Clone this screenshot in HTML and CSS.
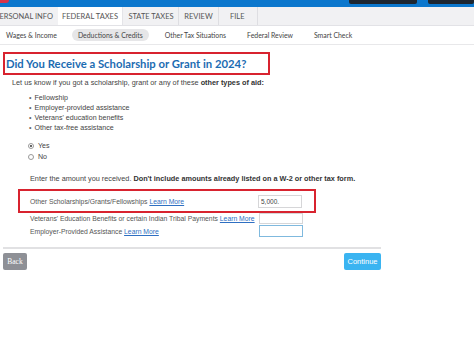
FILE: index.html
```html
<!DOCTYPE html>
<html lang="en">
<head>
    <meta charset="UTF-8">
    <title>Federal Taxes - Deductions &amp; Credits</title>
    <link rel="stylesheet" href="styles.css">
</head>
<body>

    <header id="topbar">
        <span class="logo-bit"></span>
        <span class="top-box wide"></span>
        <span class="top-box"></span>
    </header>

    <nav id="tabs">
        <div class="tab first">PERSONAL INFO</div>
        <div class="tab active">FEDERAL TAXES</div>
        <div class="tab">STATE TAXES</div>
        <div class="tab">REVIEW</div>
        <div class="tab">FILE</div>
    </nav>

    <nav id="subnav">
        <div class="sub-item">Wages &amp; Income</div>
        <div class="sub-item current">Deductions &amp; Credits</div>
        <div class="sub-item">Other Tax Situations</div>
        <div class="sub-item">Federal Review</div>
        <div class="sub-item">Smart Check</div>
    </nav>

    <main id="page">

        <h1 class="outlined">Did You Receive a Scholarship or Grant in 2024?</h1>

        <p class="intro">Let us know if you got a scholarship, grant or any of these <b>other types of aid:</b></p>

        <ul class="aid-list">
            <li>Fellowship</li>
            <li>Employer-provided assistance</li>
            <li>Veterans' education benefits</li>
            <li>Other tax-free assistance</li>
        </ul>

        <div class="choices">
            <label class="choice"><span class="radio checked"></span>Yes</label>
            <label class="choice"><span class="radio"></span>No</label>
        </div>

        <p class="enter">Enter the amount you received. <b>Don't include amounts already listed on a W-2 or other tax form.</b></p>

        <div class="amounts">
            <div class="amount-row outlined">
                <span class="label">Other Scholarships/Grants/Fellowships <a href="#">Learn More</a></span>
                <input class="amount" type="text" value="5,000.">
            </div>
            <div class="amount-row tight">
                <span class="label">Veterans' Education Benefits or certain Indian Tribal Payments <a href="#">Learn More</a></span>
                <input class="amount" type="text" value="">
            </div>
            <div class="amount-row">
                <span class="label">Employer-Provided Assistance <a href="#">Learn More</a></span>
                <input class="amount focused" type="text" value="">
            </div>
        </div>

        <div class="footer-bar">
            <button class="btn back" type="button">Back</button>
            <button class="btn continue" type="button">Continue</button>
        </div>

    </main>

</body>
</html>
```

FILE: styles.css
```css
* {
    margin: 0px;
    padding: 0px;
    box-sizing: border-box;
}
html, body {
    width: 100%;
    height: 100%;
    background: white;
}
body {
    font-family: 'Liberation Sans', Arial, sans-serif;
    color: #444;
    overflow: hidden;
}
ul {
    list-style-type: none;
}

/* top blue strip */
#topbar {
    height: 7px;
    background-color: #0b77cd;
    display: flex;
    align-items: flex-start;
}
.logo-bit {
    width: 9px;
    height: 3px;
    background-color: #d8334a;
    border-radius: 0 0 4px 0;
}
.top-box {
    height: 4px;
    background-color: #1d2630;
    border-radius: 0 0 2px 2px;
}
.top-box.wide {
    width: 68px;
    margin-left: auto;
}
.top-box:last-child {
    width: 46px;
    margin-left: 11px;
}

/* main tabs */
#tabs {
    height: 19px;
    background-color: #f1f1f3;
    border-bottom: 1px solid #e2e2e6;
    display: flex;
    font-family: 'Lato', sans-serif;
    font-size: 7.5px;
    color: #555;
    white-space: nowrap;
    overflow: hidden;
}
.tab {
    display: flex;
    align-items: center;
    flex-shrink: 0;
    padding: 0 5px;
    border-right: 1px solid #dedee2;
}
.tab.first {
    margin-left: -5px;
    padding-left: 0;
    width: 63px;
    border-right: none;
}
.tab.active {
    background-color: white;
    width: 65px;
    justify-content: center;
    border-right: 1px solid #e4e4e8;
}
.tab:nth-child(3) {
    width: 56px;
    justify-content: center;
    padding-left: 6px;
}
.tab:nth-child(4) {
    width: 40px;
    justify-content: center;
}
.tab:nth-child(5) {
    width: 39px;
    padding-left: 11px;
}

/* second row */
#subnav {
    height: 19px;
    border-bottom: 1px solid #e8e8ea;
    display: flex;
    align-items: center;
    font-family: 'Lato', sans-serif;
    font-size: 6.9px;
    color: #444;
    padding-left: 6px;
    white-space: nowrap;
}
.sub-item {
    margin-right: 15px;
}
.sub-item:nth-child(2) {
    margin-right: 16px;
}
.sub-item:nth-child(3),
.sub-item:nth-child(4) {
    margin-right: 21px;
}
.sub-item.current {
    background-color: #e6e6e8;
    border-radius: 6px;
    padding: 2px 6px;
}

#page {
    width: 378px;
    margin-left: 3px;
}

.outlined {
    border: 2px solid #d8232f;
}
h1 {
    margin-top: 7px;
    width: 267px;
    height: 23px;
    padding-left: 1px;
    display: flex;
    align-items: center;
    font-family: 'Lato', sans-serif;
    font-weight: 700;
    font-size: 11.3px;
    color: #1c6cb2;
}

.intro {
    font-size: 7.3px;
    margin: 3px 0 0 9px;
    line-height: 9px;
}
.intro b, .enter b {
    color: #333;
}
.aid-list {
    margin: 6px 0 0 26px;
    font-size: 7.1px;
    line-height: 10px;
}
.aid-list li::before {
    content: "\2022";
    margin-right: 3px;
    color: #666;
}

.choices {
    margin: 8px 0 0 25px;
    display: flex;
    flex-direction: column;
}
.choice {
    display: flex;
    align-items: center;
    font-size: 7.1px;
    height: 10.5px;
}
.radio {
    width: 6px;
    height: 6px;
    border: 1px solid #999;
    border-radius: 50%;
    margin-right: 4px;
    display: flex;
    align-items: center;
    justify-content: center;
}
.radio.checked::after {
    content: "";
    width: 2px;
    height: 2px;
    border-radius: 50%;
    background-color: #333;
}

.enter {
    margin: 12px 0 0 27px;
    font-size: 7.3px;
    white-space: nowrap;
}

.amounts {
    margin: 6px 0 0 15px;
    width: 298px;
}
.amount-row {
    display: flex;
    align-items: center;
    justify-content: space-between;
    height: 14px;
    padding: 0 13px 0 12px;
    font-size: 6.8px;
    color: #555;
    white-space: nowrap;
}
.amount-row.outlined {
    height: 24px;
    padding: 0 12px 0 10px;
}
.amount-row.tight {
    height: 11px;
}
.amount-row.tight .amount {
    height: 11px;
}
.label a {
    color: #2e6fc2;
}
.amount {
    width: 44px;
    height: 13px;
    border: 1px solid #d6d6d8;
    font-family: 'Liberation Sans', Arial, sans-serif;
    font-size: 6.5px;
    padding-left: 2px;
    color: #444;
}
.amount.focused {
    border-color: #7fb9de;
    height: 12px;
}

.footer-bar {
    margin-top: 9px;
    border-top: 2px solid #e1e1e3;
    padding: 4px 0 0 0;
    display: flex;
    justify-content: space-between;
}
.btn {
    height: 17px;
    border: none;
    border-radius: 2px;
    color: white;
    font-size: 7.5px;
}
.btn.back {
    width: 24px;
    background-color: #8e9096;
    font-family: 'Liberation Serif', serif;
}
.btn.continue {
    width: 37px;
    background-color: #3ab4f1;
    font-family: 'Liberation Sans', Arial, sans-serif;
}
```
